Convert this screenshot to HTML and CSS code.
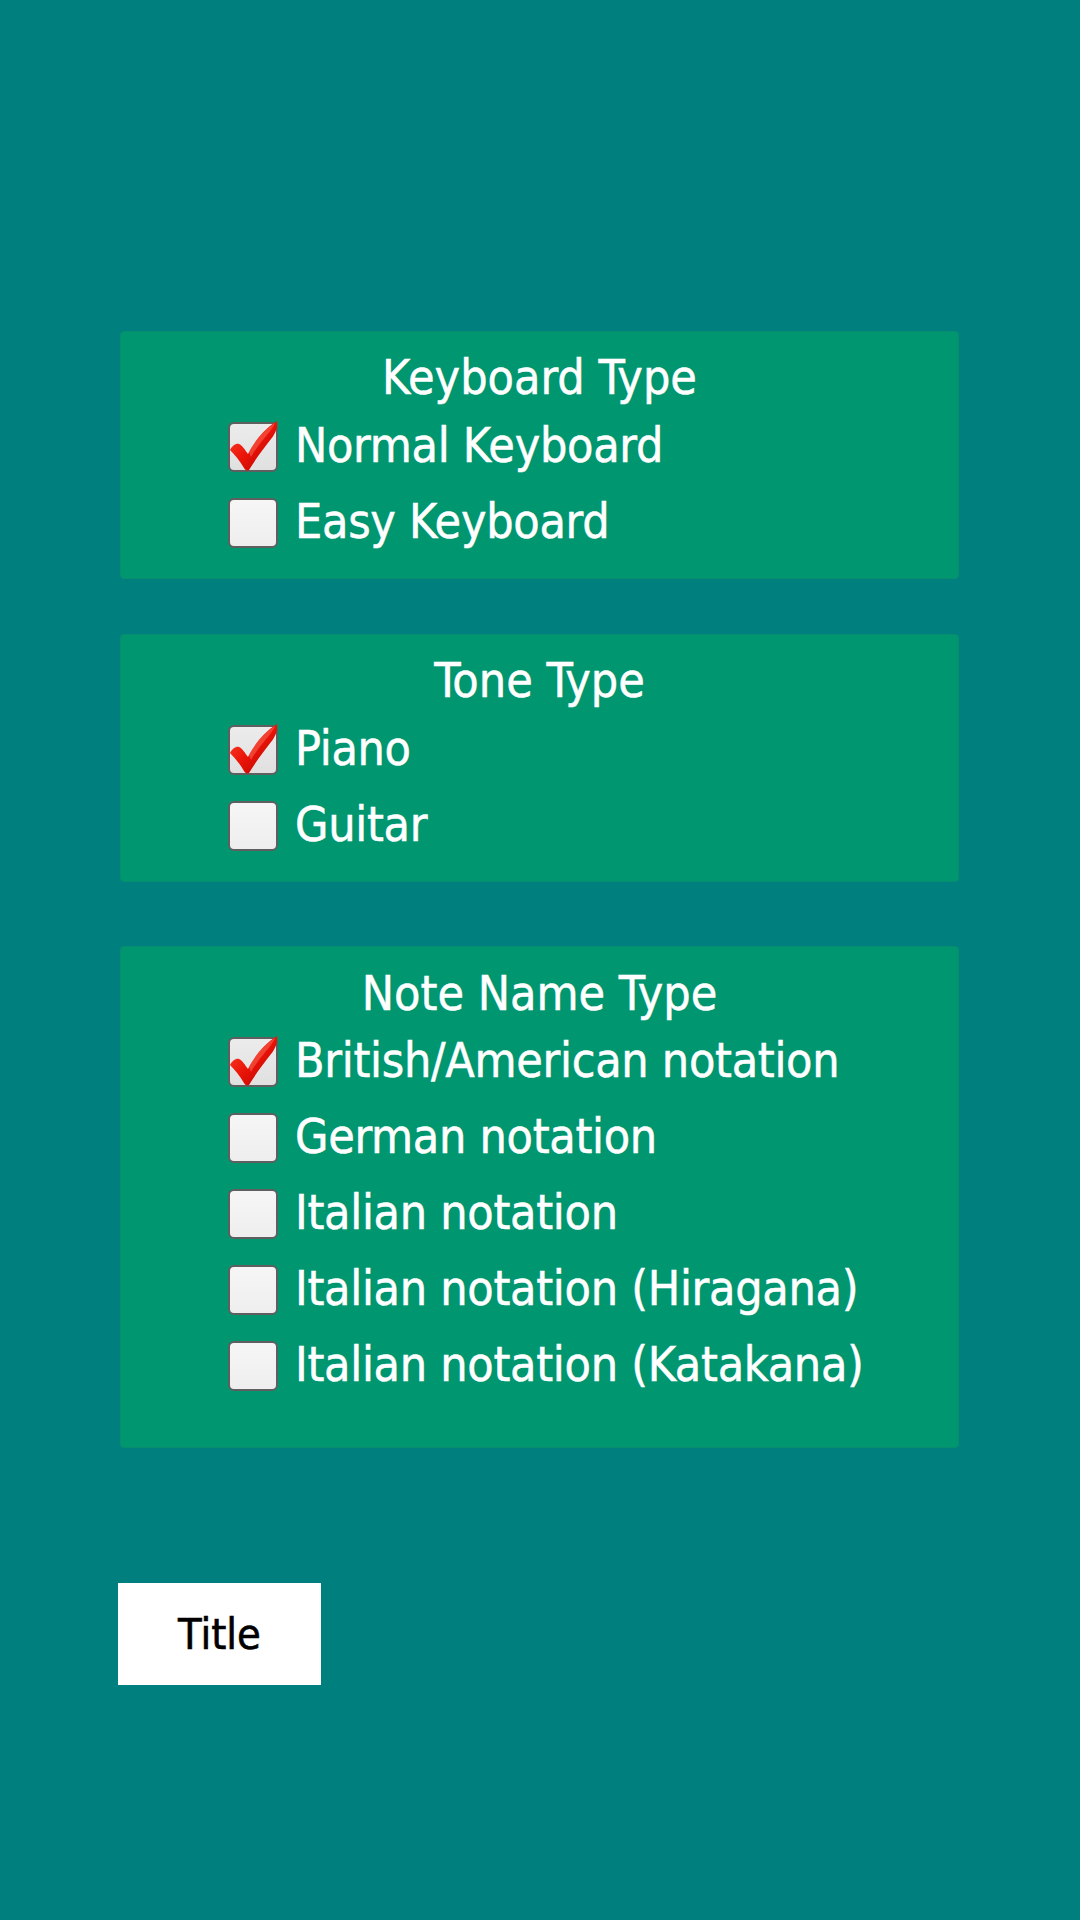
FILE: index.html
```html
<!DOCTYPE html>
<html>
<head>
<meta charset="utf-8">
<link rel="stylesheet" href="styles.css">
</head>
<body>
<div class="screen">
  <section class="panel panel-keyboard">
    <div class="panel-title">Keyboard Type</div>
    <div class="option">
      <span class="box checked"><svg class="tick" viewBox="0 0 50 50"><use href="#tick"/></svg></span>
      <span class="label">Normal Keyboard</span>
    </div>
    <div class="option">
      <span class="box"></span>
      <span class="label">Easy Keyboard</span>
    </div>
  </section>

  <section class="panel panel-tone">
    <div class="panel-title">Tone Type</div>
    <div class="option">
      <span class="box checked"><svg class="tick" viewBox="0 0 50 50"><use href="#tick"/></svg></span>
      <span class="label">Piano</span>
    </div>
    <div class="option">
      <span class="box"></span>
      <span class="label">Guitar</span>
    </div>
  </section>

  <section class="panel panel-note">
    <div class="panel-title">Note Name Type</div>
    <div class="option">
      <span class="box checked"><svg class="tick" viewBox="0 0 50 50"><use href="#tick"/></svg></span>
      <span class="label">British/American notation</span>
    </div>
    <div class="option">
      <span class="box"></span>
      <span class="label">German notation</span>
    </div>
    <div class="option">
      <span class="box"></span>
      <span class="label">Italian notation</span>
    </div>
    <div class="option">
      <span class="box"></span>
      <span class="label">Italian notation (Hiragana)</span>
    </div>
    <div class="option">
      <span class="box"></span>
      <span class="label">Italian notation (Katakana)</span>
    </div>
  </section>

  <div class="button-row">
    <button class="title-btn">Title</button>
  </div>
</div>

<svg class="defs" width="0" height="0">
  <defs>
    <linearGradient id="redgrad" x1="0" y1="0" x2="1" y2="1">
      <stop offset="0" stop-color="#ff4a30"/>
      <stop offset="0.5" stop-color="#ea1408"/>
      <stop offset="1" stop-color="#b00000"/>
    </linearGradient>
    <g id="tick">
      <path d="M2,28 C4,24 8,21 11,22 C14,23 17,28 20,32 C26,20 36,7 49,-1 C50,6 47,12 43,17 C35,27 27,38 21,48 C19,49 17,48 16,46 C12,39 7,33 2,28 Z" fill="url(#redgrad)"/>
      <path d="M21,30 C27,19 36,8 47,1 C44,8 37,15 31,23 C28,27 25,31 23,35 Z" fill="#ff7a66" opacity="0.45"/>
    </g>
  </defs>
</svg>
</body>
</html>
```
FILE: styles.css
```css
html, body {
  margin: 0;
  padding: 0;
}

body {
  background: #007f7f;
  width: 1080px;
  height: 1920px;
  overflow: hidden;
  font-family: "DejaVu Sans Condensed", "Liberation Sans", sans-serif;
  color: #ffffff;
}

.screen {
  padding: 331px 0 0 120px;
  display: flex;
  flex-direction: column;
}

.panel {
  width: 839px;
  box-sizing: border-box;
  background: #009670;
  border: 1px solid #0a8c6e;
  border-radius: 4px;
  padding: 22px 0 30px 107px;
  display: flex;
  flex-direction: column;
}

.panel-tone {
  margin-top: 55px;
}

.panel-note {
  margin-top: 64px;
  padding-top: 23px;
  padding-bottom: 56px;
}

.panel-title {
  font-size: 48px;
  line-height: 46px;
  letter-spacing: 0;
  text-align: center;
  margin-left: -107px;
  margin-bottom: 22px;
  white-space: nowrap;
  -webkit-text-stroke: 0.5px #ffffff;
}

.panel-note .panel-title {
  margin-bottom: 21px;
}

.option {
  display: flex;
  align-items: flex-start;
  gap: 17px;
}

.option + .option {
  margin-top: 26px;
}

.box {
  position: relative;
  flex: 0 0 auto;
  width: 50px;
  height: 50px;
  box-sizing: border-box;
  border: 2px solid #5f5f5f;
  border-radius: 6px;
  background: linear-gradient(#f6f6f6, #eeeeee);
}

.box.checked {
  background: linear-gradient(#ececec, #e0e0e0);
}

.tick {
  position: absolute;
  left: -2px;
  top: -2px;
  width: 50px;
  height: 50px;
  overflow: visible;
}

.label {
  font-size: 48px;
  line-height: 46px;
  letter-spacing: -0.3px;
  white-space: nowrap;
  -webkit-text-stroke: 0.5px #ffffff;
}

.defs {
  position: absolute;
  width: 0;
  height: 0;
}

.button-row {
  margin-top: 135px;
  margin-left: -2px;
}

.title-btn {
  width: 203px;
  height: 102px;
  background: #ffffff;
  border: none;
  border-radius: 0;
  padding: 0;
  font-family: "DejaVu Sans Condensed", "Liberation Sans", sans-serif;
  font-size: 43px;
  color: #000000;
  -webkit-text-stroke: 0.6px #000000;
}
```
